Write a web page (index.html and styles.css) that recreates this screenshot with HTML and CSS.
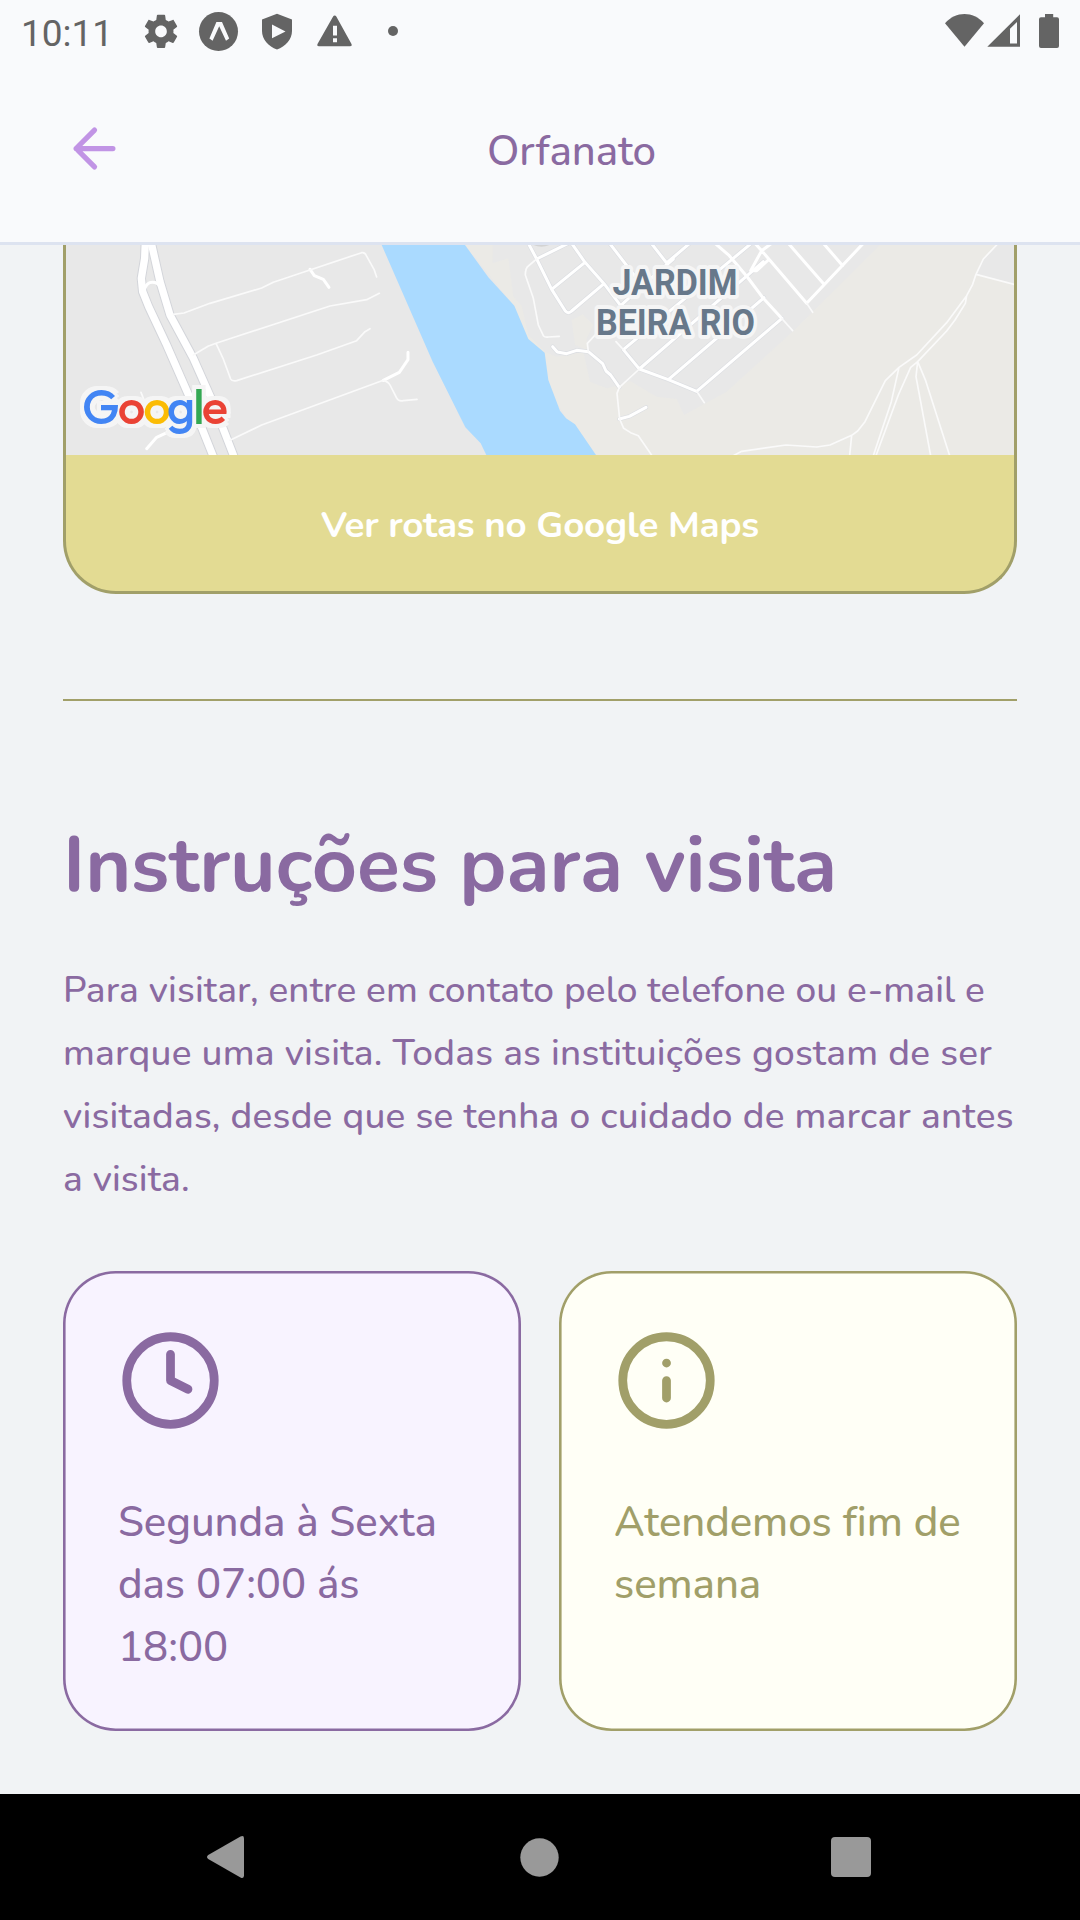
FILE: index.html
```
<!DOCTYPE html>
<html lang="pt-BR">
<head>
<meta charset="utf-8">
<title>Orfanato</title>
<link rel="stylesheet" href="styles.css">
</head>
<body>
<div class="screen">
  <div class="status-bar">
    <span class="clock">10:11</span>
    <svg class="status-left" width="256" height="63" viewBox="143 0 256 63" fill="#646464">
      <path transform="translate(141.1 11.500) scale(1.660)" d="M19.43 12.98c.04-.32.07-.64.07-.98s-.03-.66-.07-.98l2.11-1.65c.19-.15.24-.42.12-.64l-2-3.46c-.12-.22-.39-.3-.61-.22l-2.49 1c-.52-.4-1.08-.73-1.69-.98l-.38-2.65C14.46 2.18 14.25 2 14 2h-4c-.25 0-.46.18-.49.42l-.38 2.65c-.61.25-1.17.59-1.69.98l-2.49-1c-.23-.09-.49 0-.61.22l-2 3.46c-.13.22-.07.49.12.64l2.11 1.65c-.04.32-.07.65-.07.98s.03.66.07.98l-2.11 1.65c-.19.15-.24.42-.12.64l2 3.46c.12.22.39.3.61.22l2.49-1c.52.4 1.08.73 1.69.98l.38 2.65c.03.24.24.42.49.42h4c.25 0 .46-.18.49-.42l.38-2.65c.61-.25 1.17-.59 1.69-.98l2.49 1c.23.09.49 0 .61-.22l2-3.46c.12-.22.07-.49-.12-.64l-2.11-1.65zM12 15.5c-1.93 0-3.5-1.57-3.5-3.5s1.57-3.5 3.5-3.5 3.5 1.57 3.5 3.5-1.57 3.5-3.5 3.5z"/>
      <circle cx="218.5" cy="31.5" r="19.5"/>
      <path fill="#f9fafc" d="M216.4 22h5.6l7.2 16.6-3.2 2.2L219.2 26.2 212.600 40.800l-3.200-2.200z"/>
      <path d="M277 13.700l15 5.800v11.500c0 8.500-6.500 15.500-15 18.500-8.500-3-15-10-15-18.500V19.500zM272 24.600v13.600l13.500-6.800z" fill-rule="evenodd"/>
      <path d="M334.700 15.500q1 0 1.600 1l15.200 27.600q.8 2.200-1.400 2.200h-31.200q-2.200 0-1.400-2.200l15.600-27.600q.6-1 1.600-1zM333 25.700v9.800h4v-9.800zm0 12.600v4h4v-4z" fill-rule="evenodd"/>
      <circle cx="393" cy="31" r="5"/>
    </svg>
    <svg class="status-right" width="115" height="63" viewBox="945 0 115 63" fill="#646464">
      <path d="M945 23.300C956 11 973 11 984 23.300L964.500 46.700z"/>
      <path d="M1020 14.300V46.700H987.300zM1010 28.800V43.500h7V22z" fill-rule="evenodd"/>
      <path d="M1045 14h8.200v3.200h3.800q2 0 2 2V46q0 2-2 2h-16q-2 0-2-2V19.200q0-2 2-2h4z"/>
    </svg>
  </div>

  <header class="header">
    <svg class="back" width="63" height="63" viewBox="0 0 24 24"><path d="M19 12H5M12 19l-7-7 7-7"/></svg>
    <h1 class="header-title">Orfanato</h1>
  </header>

  <main class="content">
    <section class="map-card">
      <svg class="map" width="948" height="210" viewBox="66 245 948 210">
        <rect x="66" y="245" width="948" height="210" fill="#e8e8e8"/>
        <g transform="translate(360 235) scale(.33333)">
          <path fill="#ebeae6" d="M315 30H398V85L445 70 460 185 485 212 505 300 555 350 590 365 670 350 690 440 740 460 780 450 810 438 890 485 950 492 972 540 1100 470 1300 288 1560 30H1970V670H700L540 430 460 210z"/>
          <path fill="#e8e8e8" d="M1848 118L1870 70 1912 30H1970V148z"/>
          <path fill="#ebeae6" d="M635 255L668 238 700 270 680 310 682 345 645 330z"/>
          <path fill="#aadaff" d="M65 30H315L385 127 463 212 505 312 554 353 565 435 600 527 618 550 645 568 708 660H379L362 625 316 577 218 380z"/>
          <path fill="#d3d3d3" d="M520 30H568Q545 40 520 30z"/>
        </g>

        <g class="roads" transform="translate(50 235) scale(.33333)">
          <g class="road-shade">
            <path class="avenue" d="M286 20L284 70 274 130 278 170 296 215 350 330 420 490 490 665"/>
            <path class="avenue" d="M303 20L330 140 360 240 430 370 490 505 552 665"/>
          </g>
          <path class="avenue" d="M286 20L284 70 274 130 278 170 296 215 350 330 420 490 490 665"/>
          <path class="avenue" d="M303 20L330 140 360 240 430 370 490 505 552 665"/>
          <path class="street" d="M284 162Q290 142 307 142T330 156M290 641L320 607 365 586"/>
          <path class="street" d="M780 103L793 122 820 133 837 157M1074 352V374L1048 412 1000 436"/>
          <path class="lane" d="M370 238L402 234 480 205 635 159 670 142 935 53Q945 51 949 62L972 103 980 126"/>
          <path class="lane" d="M430 360L474 334 498 325 840 213 950 194 988 175M498 325L519 370 542 432Q546 440 560 437L800 360 920 317 945 290 960 281"/>
          <path class="lane" d="M540 616L635 570 1000 436Q1015 440 1020 450L1040 489Q1045 500 1060 497L1101 493M273 472L286 505M345 502L400 487"/>
        </g>

        <g class="roads" transform="translate(360 235) scale(.33333)">
          <g class="road-shade">
            <path class="street" d="M505 25L530 72 575 163 616 228Q625 238 635 228L732 146M530 72L635 20M575 163L675 82M635 25L675 82 732 146 782 212 850 150 940 72M745 20L845 150M870 20L920 84 995 20M790 344L1180 20M790 344L838 402 925 434 1010 469M838 402L1210 80M925 434L1212 188M1010 469L1266 250"/>
            <path class="street" d="M578 335L592 351 620 356 650 346 685 350 728 386 738 408 752 420 778 457M778 552L808 544 858 517"/>
          </g>
          <path class="street" d="M505 25L530 72 575 163 616 228Q625 238 635 228L732 146M530 72L635 20M575 163L675 82M635 25L675 82 732 146 782 212 850 150 940 72M745 20L845 150M870 20L920 84 995 20M790 344L1180 20M790 344L838 402 925 434 1010 469M838 402L1210 80M925 434L1212 188M1010 469L1266 250"/>
          <path class="street" d="M578 335L592 351 620 356 650 346 685 350 728 386 738 408 752 420 778 457M778 552L808 544 858 517"/>
          <path class="lane" d="M530 72L505 93Q496 100 496 120L520 190 535 270 550 302Q555 308 565 306L598 304M685 350L682 325 710 295M838 402L778 457 771 475 779 552 791 580 812 593 835 602 876 662M768 320L790 344M1010 469L1033 503"/>
        </g>

        <g class="roads" transform="translate(680 235) scale(.33333)">
          <path class="street" d="M105 25L148 62 202 126 250 190 305 250M225 25L245 47 380 205 550 25M275 25L245 47 212 107H230L265 75M325 25L432 148M430 25L488 92"/>
          <path class="lane" d="M380 205L398 232M305 250L338 287"/>
          <path class="lane" d="M950 30L910 72 888 118 878 148 860 182 800 263 710 360 657 397 616 437 555 560 533 588 515 601 450 630 410 636 318 630 185 649 160 662M888 118L1005 149M860 182L856 205 825 255 800 288 713 380 692 397 655 480 588 662M657 397L634 500 580 662M713 380L708 425 752 662M713 380L737 437 809 662M515 601L509 662"/>
        </g>

        <g class="district">
          <text x="612.500" y="294.700" textLength="125" lengthAdjust="spacingAndGlyphs">JARDIM</text>
          <text x="596" y="334.600" textLength="159" lengthAdjust="spacingAndGlyphs">BEIRA RIO</text>
        </g>
        <text class="google" y="424"><tspan x="101" fill="#4285f4">G</tspan><tspan x="131.500" fill="#ea4335">o</tspan><tspan x="157" fill="#fbbc05">o</tspan><tspan x="181" fill="#4285f4">g</tspan><tspan x="199" fill="#34a853">l</tspan><tspan x="214.800" fill="#ea4335">e</tspan></text>
      </svg>
      <div class="routes">Ver rotas no Google Maps</div>
    </section>

    <hr class="divider">

    <h2 class="title">Instruções para visita</h2>
    <p class="description">
      <span class="line">Para visitar, entre em contato pelo telefone ou e-mail e</span>
      <span class="line line-wide">marque uma visita. Todas as instituições gostam de ser</span>
      <span class="line line-wide">visitadas, desde que se tenha o cuidado de marcar antes</span>
      <span class="line">a visita.</span>
    </p>

    <section class="cards">
      <article class="card card-purple">
        <svg class="card-icon" width="105" height="105" viewBox="0 0 24 24"><circle cx="12" cy="12" r="10"/><path d="M12 6v6l4 2"/></svg>
        <p class="card-text">
          <span class="line">Segunda à Sexta</span>
          <span class="line">das 07:00 ás</span>
          <span class="line">18:00</span>
        </p>
      </article>
      <article class="card card-olive">
        <svg class="card-icon" width="105" height="105" viewBox="0 0 24 24"><circle cx="12" cy="12" r="10"/><path d="M12 16v-4M12 8h.01"/></svg>
        <p class="card-text">
          <span class="line">Atendemos fim de</span>
          <span class="line">semana</span>
        </p>
      </article>
    </section>
  </main>

  <nav class="nav-bar">
    <svg width="37" height="42" viewBox="0 0 37 42"><path d="M33.500.6Q37-1 37 2.500v37q0 3.500-3.500 1.900L1.200 23q-2.400-2 0-4z"/></svg>
    <svg class="nav-home" width="39" height="39" viewBox="0 0 39 39"><circle cx="19.500" cy="19.500" r="19.200"/></svg>
    <svg width="40" height="40" viewBox="0 0 40 40"><rect width="40" height="40" rx="4"/></svg>
  </nav>
</div>
</body>
</html>
```
FILE: styles.css
```
* { box-sizing: border-box; margin: 0; padding: 0; }

body {
  font-family: "Nunito", "Lato", sans-serif;
  font-weight: 550;
  color: #8a6aa1;
  background: #f1f3f5;
}

svg { display: block; flex: none; }

.screen {
  width: 1080px;
  height: 1920px;
  display: flex;
  flex-direction: column;
  overflow: hidden;
}

/* Android status bar */
.status-bar {
  display: flex;
  align-items: center;
  height: 63px;
  padding: 0 20px 0 21px;
  background: #f9fafc;
}
.clock {
  width: 122px;
  padding-top: 4px;
  font: 400 37px/44px "Roboto", sans-serif;
  color: #646464;
}
.status-right { margin-left: auto; }

/* Screen header */
.header {
  display: flex;
  align-items: center;
  height: 182px;
  padding: 0 63px 8px;
  background: #f9fafc;
  border-bottom: 3px solid #dde3f0;
}
.back {
  fill: none;
  stroke: #c194e5;
  stroke-width: 2;
  stroke-linecap: round;
  stroke-linejoin: round;
}
.header-title {
  flex: 1;
  padding-top: 6px;
  text-align: center;
  font-size: 42px;
  font-weight: 550;
  line-height: 50px;
  letter-spacing: -.14px;
}

/* Scrolled content */
.content { flex: 1; padding: 0 63px; }

.map-card {
  height: 349px;
  border: 3px solid #a19f69;
  border-top: 0;
  border-radius: 0 0 53px 53px;
  background: #e3db93;
  overflow: hidden;
}
.roads { fill: none; stroke-linejoin: round; stroke-linecap: round; }
.avenue { stroke: #fff; stroke-width: 22; }
.street { stroke: #fff; stroke-width: 9; }
.lane { stroke: #fafafa; stroke-width: 5; }
.road-shade .avenue { stroke: #d3d5da; stroke-width: 28; }
.road-shade .street { stroke: #dcdee2; stroke-width: 13; }
.district {
  font: 700 37.500px "Roboto", sans-serif;
  fill: #67788a;
  stroke: #f5f5f5;
  stroke-width: 8px;
  stroke-linejoin: round;
  paint-order: stroke;
}
.google {
  font: 500 49px "Outfit", "Lato", sans-serif;
  text-anchor: middle;
  filter: drop-shadow(4px 0 0 #f5f5f5) drop-shadow(-4px 0 0 #f5f5f5) drop-shadow(0 4px 0 #f5f5f5) drop-shadow(0 -4px 0 #f5f5f5);
}
.routes {
  height: 136px;
  padding-top: 2px;
  text-align: center;
  font-size: 36.750px;
  font-weight: 700;
  line-height: 136px;
  letter-spacing: -.2px;
  color: #fff;
}

.divider { height: 2px; margin-top: 105px; border: 0; background: #a19f69; }

.title {
  margin-top: 119px;
  font-size: 78.750px;
  font-weight: 700;
  line-height: 90px;
  letter-spacing: -.080px;
  white-space: nowrap;
}

.description {
  margin-top: 49px;
  font-size: 37px;
  line-height: 63px;
  letter-spacing: .13px;
}
.line { display: block; white-space: nowrap; }
.line-wide { letter-spacing: .24px; }

.cards {
  display: grid;
  grid-template-columns: repeat(2, minmax(0, 1fr));
  gap: 38px;
  margin-top: 60px;
}
.card {
  height: 460px;
  padding: 57px 55px;
  border-radius: 52.500px;
}
.card-purple { color: #8a6aa1; background: #f8f3ff; box-shadow: inset 0 0 0 2.600px #8a6aa1; }
.card-olive { color: #a19f69; background: #fffff6; box-shadow: inset 0 0 0 2.600px #a19f69; }
.card-icon {
  fill: none;
  stroke: currentColor;
  stroke-width: 2;
  stroke-linecap: round;
  stroke-linejoin: round;
}
.card-text {
  margin-top: 58.500px;
  font-size: 42px;
  line-height: 62.500px;
  letter-spacing: -.090px;
}

/* Android navigation bar */
.nav-bar {
  display: flex;
  justify-content: space-between;
  align-items: center;
  height: 126px;
  padding: 0 209px 0 207px;
  background: #000;
  fill: #999;
}
.nav-home { margin-left: 4px; }
```
